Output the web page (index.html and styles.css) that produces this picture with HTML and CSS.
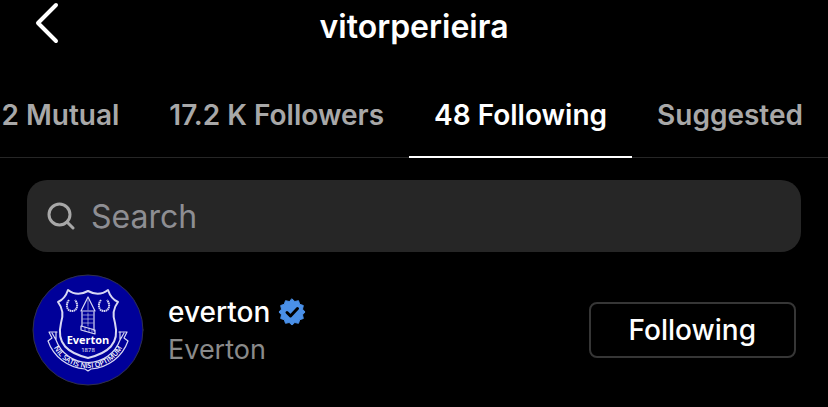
FILE: index.html
```html
<!DOCTYPE html>
<html lang="en">
<head>
  <meta charset="UTF-8">
  <meta name="viewport" content="width=device-width, initial-scale=1">
  <title>vitorperieira</title>
  <link rel="stylesheet" href="styles.css">
</head>
<body>

  <!-- Top bar -->
  <header class="topbar">
    <button class="back" aria-label="Back">
      <svg width="26" height="42" viewBox="0 0 26 42"><path d="M22 3 4 21 22 39"/></svg>
    </button>
    <h1>vitorperieira</h1>
  </header>

  <!-- Tabs -->
  <nav class="tabs">
    <button class="tab">2 Mutual</button>
    <button class="tab">17.2 K Followers</button>
    <button class="tab active">48 Following</button>
    <button class="tab">Suggested</button>
  </nav>

  <main>
    <!-- Search -->
    <label class="search">
      <svg width="28" height="28" viewBox="0 0 28 28"><circle cx="12.5" cy="12.5" r="10.5"/><path d="M20 20 26 26"/></svg>
      <input type="text" placeholder="Search" aria-label="Search">
    </label>

    <!-- Accounts -->
    <ul class="accounts">
      <li class="account">
        <svg class="avatar" viewBox="0 0 112 112" role="img" aria-label="Everton crest">
          <circle class="avatar-bg" cx="56" cy="56" r="55"/>
          <g class="crest">
            <!-- ribbon -->
            <path d="M25 58H17L20 64 16 67A42 42 0 0 0 53 95L56 97 59 95A42 42 0 0 0 96 67L92 64 95 58H87"/>
            <path d="M20 59 24 66M92 59 88 66M24 58V66A34 34 0 0 0 88 66V58"/>
            <!-- shield -->
            <path class="bold" d="M36 16Q45 23 56 17Q67 23 76 16Q79 25 86 28Q79 37 83 49C88 70 76 79 56 84C36 79 24 70 29 49Q33 37 26 28Q33 25 36 16Z"/>
            <!-- tower -->
            <path d="M56 23 49 37H63ZM50 38V52M62 38V57M49 52 63 56V60L49 56Z"/>
            <path class="thin" d="M56 26V36M56 39V52M51 41H61M51 45H61M51 49H61M53 53V57M57 54V58M60 55V59"/>
            <!-- wreaths -->
            <path class="wreath" d="M37 26C33 31 35 37 40 37S47 31 43 26M69 26C65 31 67 37 72 37S79 31 75 26"/>
          </g>
          <path id="motto" class="motto-line" d="M20 70A39 39 0 0 0 92 70"/>
          <text class="crest-name" x="56" y="70">Everton</text>
          <text class="crest-year" x="56" y="78">1878</text>
          <text class="crest-motto"><textPath href="#motto" startOffset="50%">NIL SATIS NISI OPTIMUM</textPath></text>
        </svg>
        <div class="names">
          <a href="#" class="username">everton
            <svg class="verified" width="28" height="28" viewBox="0 0 28 28" role="img" aria-label="Verified">
              <path class="seal" d="M14 1 16.8 3.5 20.5 2.7 21.7 6.3 25.3 7.5 24.5 11.2 27 14 24.5 16.8 25.3 20.5 21.7 21.7 20.5 25.3 16.8 24.5 14 27 11.2 24.5 7.5 25.3 6.3 21.7 2.7 20.5 3.5 16.8 1 14 3.5 11.2 2.7 7.5 6.3 6.3 7.5 2.7 11.2 3.5Z"/>
              <path class="check" d="M9 14.5 12.5 18 19.5 10.5"/>
            </svg>
          </a>
          <span class="fullname">Everton</span>
        </div>
        <button class="follow">Following</button>
      </li>
    </ul>
  </main>

</body>
</html>
```
FILE: styles.css
```css
* {
  box-sizing: border-box;
}
body {
  margin: 0;
  background: #000;
  color: #fff;
  font-family: Inter, sans-serif;
  font-size: 28px;
}
button {
  font: inherit;
  color: inherit;
  background: none;
  border: none;
  padding: 0;
  cursor: pointer;
}
svg {
  fill: none;
  stroke-linecap: round;
  stroke-linejoin: round;
}

/* top bar */
.topbar {
  display: grid;
  grid-template-columns: 1fr auto 1fr;
  align-items: center;
  height: 72px;
  padding: 0 34px 18px;
}
.back {
  justify-self: start;
  height: 42px;
  margin-top: -8px;
}
.back svg {
  display: block;
  stroke: #fff;
  stroke-width: 4;
}
h1 {
  margin: 0;
  font-size: 32px;
  line-height: 40px;
  font-weight: 600;
}

/* tabs */
.tabs {
  display: flex;
  justify-content: flex-end;
  height: 86px;
  border-bottom: 1px solid #262626;
  white-space: nowrap;
}
.tab {
  flex: none;
  padding: 2px 25px 0;
  margin-bottom: -1px;
  color: #a8a8a8;
  font-weight: 600;
  border-bottom: 2px solid transparent;
}
.tab.active {
  color: #fff;
  border-color: #fff;
}

/* search */
.search {
  display: flex;
  align-items: center;
  gap: 16px;
  height: 72px;
  margin: 22px 27px;
  padding: 0 20px;
  background: #262626;
  border-radius: 20px;
}
.search svg {
  flex: none;
  stroke: #a8a8a8;
  stroke-width: 3;
}
.search input {
  flex: 1;
  min-width: 0;
  padding: 0;
  border: none;
  outline: none;
  background: none;
  color: #fff;
  font: 32px Inter, sans-serif;
}
.search input::placeholder {
  color: #8e8e93;
}

/* accounts */
.accounts {
  list-style: none;
  margin: 0;
  padding: 0 32px;
}
.account {
  display: flex;
  align-items: center;
}
.avatar {
  flex: none;
  width: 112px;
  height: 112px;
}
.avatar-bg {
  fill: #000099;
  stroke: #30304a;
  stroke-width: 1;
}
.crest {
  stroke: #d8d8f4;
  stroke-width: 1.2;
}
.bold {
  stroke-width: 2;
}
.thin {
  stroke-width: 1;
  opacity: 0.6;
}
.wreath {
  stroke-width: 2;
  stroke-linecap: butt;
  stroke-dasharray: 1.5 0.5;
}
.motto-line {
  stroke: none;
}
.avatar text {
  fill: #fff;
  text-anchor: middle;
  font-family: "Open Sans", sans-serif;
}
.crest-name {
  font-size: 11px;
  font-weight: 700;
}
.crest-year {
  font-size: 6px;
}
.avatar .crest-motto {
  font-size: 7px;
  font-weight: 600;
}
.names {
  flex: 1;
  display: flex;
  flex-direction: column;
  gap: 2px;
  padding: 2px 0 0 24px;
  line-height: 36px;
}
.username {
  display: flex;
  align-items: center;
  gap: 8px;
  color: #fff;
  font-weight: 500;
  text-decoration: none;
}
.seal {
  fill: #4a90e8;
  stroke: #4a90e8;
  stroke-width: 1;
}
.check {
  stroke: #000;
  stroke-width: 3;
}
.fullname {
  color: #8a8a8a;
  font-size: 27px;
}
.follow {
  height: 56px;
  padding: 0 38px;
  border: 2px solid #363636;
  border-radius: 8px;
  font-weight: 500;
}
```
